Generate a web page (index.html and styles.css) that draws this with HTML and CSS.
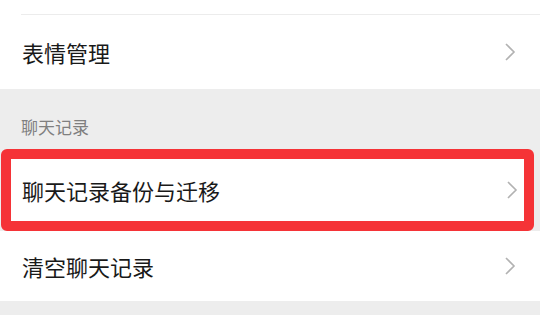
FILE: index.html
```html
<!DOCTYPE html>
<html lang="zh-CN">
<head>
    <meta charset="UTF-8">
    <meta name="viewport" content="width=device-width, initial-scale=1.0">
    <title>聊天设置</title>
    <link rel="stylesheet" href="styles.css">
</head>
<body>
    <div class="top-strip"></div>
    <div class="cell">
        <span class="cell-title">表情管理</span>
        <svg class="arrow" width="12" height="20" viewBox="0 0 12 20"><polyline points="2,2 10,10 2,18" /></svg>
    </div>
    <div class="section-title">聊天记录</div>
    <div class="cell cell-marked">
        <span class="cell-title">聊天记录备份与迁移</span>
        <svg class="arrow" width="12" height="20" viewBox="0 0 12 20"><polyline points="2,2 10,10 2,18" /></svg>
    </div>
    <div class="cell cell-last">
        <span class="cell-title">清空聊天记录</span>
        <svg class="arrow" width="12" height="20" viewBox="0 0 12 20"><polyline points="2,2 10,10 2,18" /></svg>
    </div>
</body>
</html>
```

FILE: styles.css
```css
body {
    margin: 0;
    background-color: #ededed;
    font-family: "Noto Sans CJK SC", "Noto Sans", sans-serif;
    color: #191919;
}
.top-strip {
    height: 14px;
    margin-left: 21px;
    background-color: #fff;
    border-bottom: 1px solid #ececec;
    box-shadow: -21px 0 0 #fff;
}
.cell {
    display: flex;
    justify-content: space-between;
    align-items: center;
    height: 74px;
    padding: 0 24px 0 22px;
    background-color: #fff;
}
.cell-title {
    font-size: 22px;
    line-height: 1;
}
.arrow {
    fill: none;
    stroke: #b2b2b2;
    stroke-width: 1.6;
}
.section-title {
    height: 60px;
    padding-left: 21px;
    box-sizing: border-box;
    padding-top: 29px;
    font-size: 17px;
    line-height: 1;
    color: #7f7f7f;
}
.cell-marked {
    height: 62px;
    margin: 0 6px 0 1px;
    padding: 0 6px 0 11px;
    border: 10px solid #f53337;
    border-radius: 6px;
}
.cell-last {
    height: 70px;
}
```
